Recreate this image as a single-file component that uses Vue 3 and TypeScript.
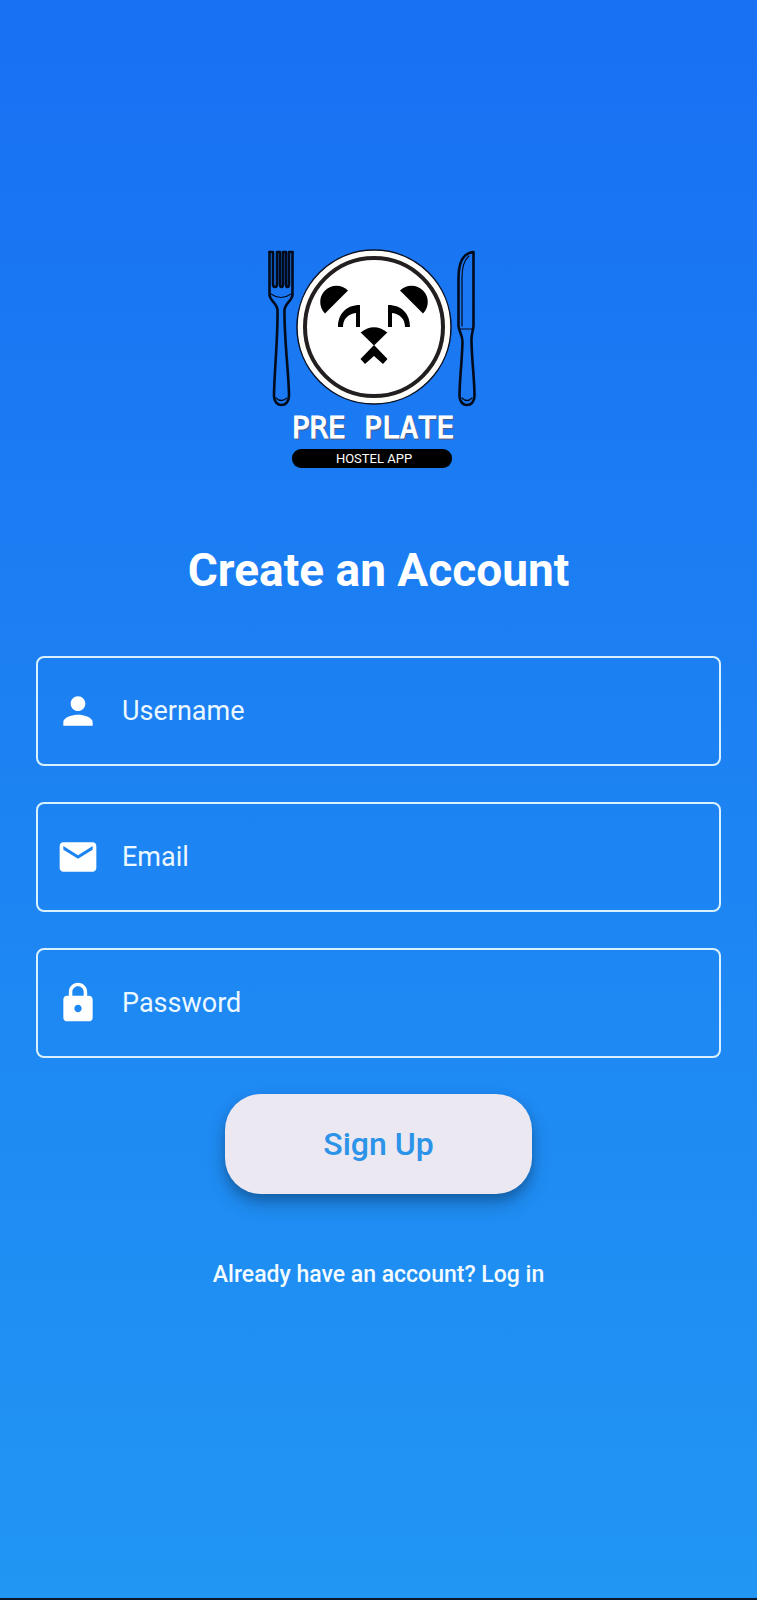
<script setup lang="ts">
import { reactive } from 'vue'

type FieldKey = 'username' | 'email' | 'password'

interface Field {
  key: FieldKey
  label: string
  type: string
  autocomplete: string
  icon: string
}

const fields: Field[] = [
  {
    key: 'username',
    label: 'Username',
    type: 'text',
    autocomplete: 'username',
    icon: 'M12 12c2.21 0 4-1.79 4-4s-1.79-4-4-4-4 1.79-4 4 1.79 4 4 4zm0 2c-2.67 0-8 1.34-8 4v2h16v-2c0-2.66-5.33-4-8-4z',
  },
  {
    key: 'email',
    label: 'Email',
    type: 'email',
    autocomplete: 'email',
    icon: 'M20 4H4c-1.1 0-1.99.9-1.99 2L2 18c0 1.1.9 2 2 2h16c1.1 0 2-.9 2-2V6c0-1.1-.9-2-2-2zm0 4l-8 5-8-5V6l8 5 8-5v2z',
  },
  {
    key: 'password',
    label: 'Password',
    type: 'password',
    autocomplete: 'new-password',
    icon: 'M18 8h-1V6c0-2.76-2.24-5-5-5S7 3.24 7 6v2H6c-1.1 0-2 .9-2 2v10c0 1.1.9 2 2 2h12c1.1 0 2-.9 2-2V10c0-1.1-.9-2-2-2zm-6 9c-1.1 0-2-.9-2-2s.9-2 2-2 2 .9 2 2-.9 2-2 2zm3.1-9H8.9V6c0-1.71 1.39-3.1 3.1-3.1 1.71 0 3.1 1.39 3.1 3.1v2z',
  },
]

const form = reactive<Record<FieldKey, string>>({ username: '', email: '', password: '' })
</script>

<template>
  <main class="screen">
    <svg class="logo" viewBox="0 0 221 224" role="img" aria-label="Pre Plate Hostel App">
      <!-- fork -->
      <g fill="none" stroke="#020b1c" stroke-width="2.600" stroke-linejoin="round" stroke-linecap="round">
        <path d="M1.500 4V47C2 53 9 55 9.500 62C10 90 6 128 6 148C6 160 21 160 21 148C21 128 16 90 16.500 62C17 55 24 53 24.500 47V4" />
        <path d="M1.500 4H5V36Q5 39 7 39Q9 39 9 36V4H12V36Q12 39 13.500 39Q15 39 15 36V4H18V36Q18 39 19.500 39Q21 39 21 36V4H24.500" />
        <path d="M3 46Q13 53 23 46M8 150Q13 155 19 150" stroke-width="1.200" />
      </g>
      <!-- plate and panda face -->
      <circle cx="106" cy="79" r="77" fill="#fffdfa" stroke="#0a1020" stroke-width="1.500" />
      <circle cx="106" cy="79" r="69" fill="#fff" stroke="#231f20" stroke-width="4" />
      <path d="M57 65.500A16.200 16.200 0 0 1 80 42.500Z" />
      <path d="M155 65.500A16.200 16.200 0 0 0 132 42.500Z" />
      <path d="M70 79C70 66 78 57 92 57V79H88V65C80 66 75 71 75 79Z" />
      <path d="M142 79C142 66 134 57 120 57V79H124V65C132 66 137 71 137 79Z" />
      <path d="M92.700 84.500Q106 74 119.300 84.500L106 97.500Z" />
      <path d="M106 97L119.500 111L115 116L106 108L97 116L92.500 111Z" />
      <!-- knife -->
      <g fill="none" stroke="#020b1c" stroke-width="2.600" stroke-linejoin="round" stroke-linecap="round">
        <path d="M205.500 4V78C205 84 203 86 203.500 94C204 114 206.500 132 206.500 148C206.500 160 191.500 160 191.500 148C191.500 132 194 114 194.500 94C194.500 86 191 84 190.500 78V30C190.500 15 195 5 205.500 4Z" />
        <path d="M194 78V30C194 20 196 12 201 8M192 81H204M194 150Q199 155 204 150" stroke-width="1.200" />
      </g>
      <text class="wordmark shade" x="106" y="191" text-anchor="middle">PRE PLATE</text>
      <text class="wordmark" x="105" y="190" text-anchor="middle">PRE PLATE</text>
      <rect x="24" y="201" width="160" height="19" rx="9" />
      <text class="tagline" x="106" y="215" text-anchor="middle">HOSTEL APP</text>
    </svg>

    <h1 class="title">Create an Account</h1>

    <form class="form" @submit.prevent>
      <label v-for="field in fields" :key="field.key" class="field" :for="field.key">
        <svg class="icon" viewBox="0 0 24 24" aria-hidden="true"><path :d="field.icon" /></svg>
        <input
          :id="field.key"
          v-model="form[field.key]"
          :type="field.type"
          :placeholder="field.label"
          :aria-label="field.label"
          :autocomplete="field.autocomplete"
        />
      </label>
      <button class="submit" type="submit">Sign Up</button>
    </form>

    <a class="login" href="#login">Already have an account? Log in</a>
  </main>
</template>

<style>
body {
  margin: 0;
}
</style>

<style scoped>
.screen {
  box-sizing: border-box;
  min-height: 100vh;
  padding: 0 36px 62px;
  display: flex;
  flex-direction: column;
  align-items: center;
  justify-content: center;
  border-bottom: 2px solid #07182c;
  background: linear-gradient(#1870f3, #2196f3);
  color: #fff;
  font-family: Roboto, "Liberation Sans", sans-serif;
}

.logo {
  width: 221px;
  height: 224px;
}

.wordmark {
  fill: #fff;
  stroke: #fff;
  stroke-width: 1px;
  font: 30px "DejaVu Sans Mono", monospace;
}

.shade {
  fill: #4a5a86;
  stroke: #4a5a86;
}

.tagline {
  fill: #fff;
  font: 13px Roboto, "Liberation Sans", sans-serif;
}

.title {
  margin: 72px 0 60px;
  font-size: 46px;
  line-height: 52px;
  font-weight: 700;
  text-align: center;
}

.form {
  width: 100%;
  display: flex;
  flex-direction: column;
  align-items: center;
  gap: 36px;
}

.field {
  box-sizing: border-box;
  width: 100%;
  height: 110px;
  padding: 0 18px;
  display: flex;
  align-items: center;
  gap: 22px;
  border: 2px solid #d9f1ff;
  border-radius: 8px;
}

.icon {
  flex: none;
  width: 44px;
  height: 44px;
  fill: #fff;
}

.field input {
  flex: 1;
  min-width: 0;
  padding: 0;
  border: 0;
  outline: 0;
  background: transparent;
  color: #fff;
  font: 400 27px/40px Roboto, "Liberation Sans", sans-serif;
}

.field input::placeholder {
  color: #ebf8ff;
  opacity: 1;
}

.submit {
  padding: 30px 98px;
  border: 0;
  border-radius: 36px;
  background: #ece8f2;
  box-shadow: 0 10px 20px rgba(0, 0, 0, 0.2), 0 6px 10px rgba(0, 0, 0, 0.16);
  color: #2b93e8;
  font: 500 32px/40px Roboto, "Liberation Sans", sans-serif;
  cursor: pointer;
}

.login {
  margin-top: 67px;
  color: #f2fbff;
  font-size: 23px;
  line-height: 28px;
  font-weight: 500;
  text-decoration: none;
}
</style>
